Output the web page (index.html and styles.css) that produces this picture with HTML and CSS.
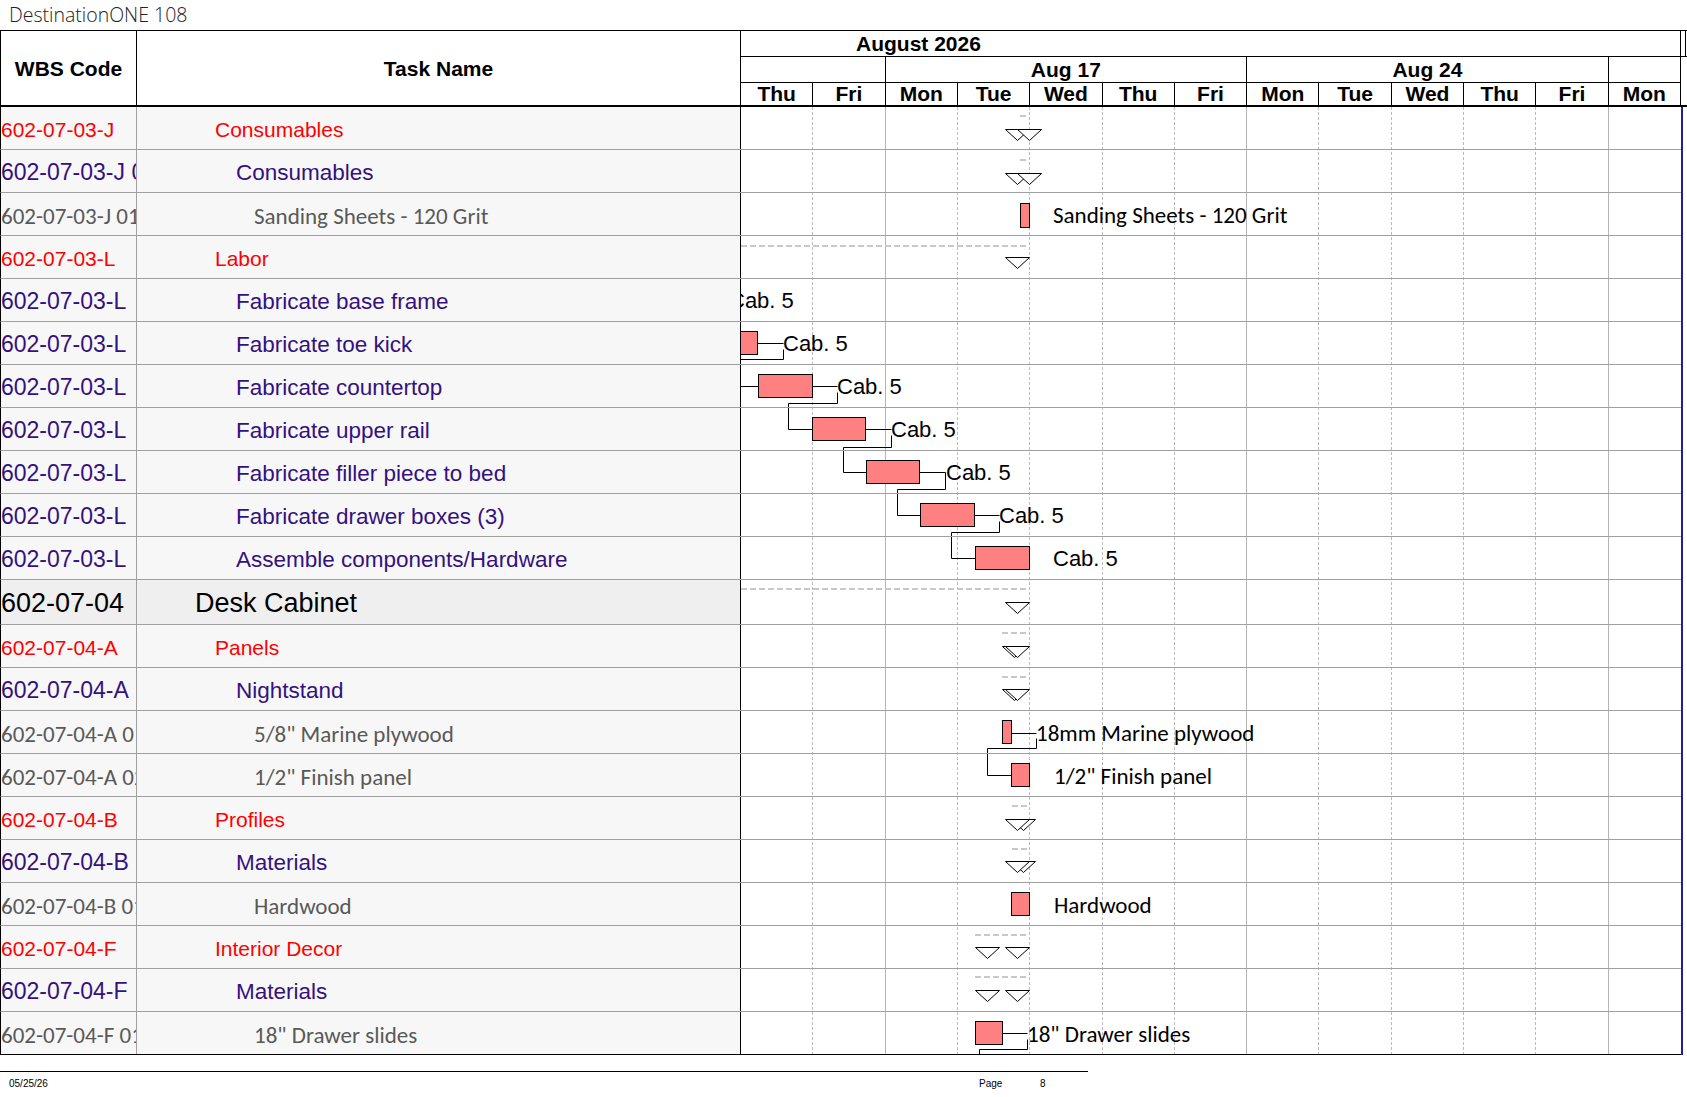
FILE: index.html
```html
<!DOCTYPE html>
<html lang="en">
<head>
<meta charset="utf-8">
<title>DestinationONE 108</title>
<link rel="stylesheet" href="styles.css">
</head>
<body>
<div class="title">DestinationONE 108</div>
<div class="sheet">
  <div class="head">
    <div class="h-wbs">WBS Code</div>
    <div class="h-task">Task Name</div>
    <div class="h-gantt">
      <div class="h-month"><div class="month">August 2026</div><div class="month-next"></div></div>
      <div class="h-weeks">
        <div class="wk w2"></div>
        <div class="wk w5">Aug 17</div>
        <div class="wk w5">Aug 24</div>
        <div class="wk w1"></div>
      </div>
      <div class="h-days">
        <div class="day">Thu</div><div class="day">Fri</div><div class="day">Mon</div><div class="day">Tue</div><div class="day">Wed</div><div class="day">Thu</div><div class="day">Fri</div><div class="day">Mon</div><div class="day">Tue</div><div class="day">Wed</div><div class="day">Thu</div><div class="day">Fri</div><div class="day">Mon</div>
      </div>
    </div>
  </div>
  <div class="body">
    <div class="ltable">
      <div class="lrow l1"><div class="code">602-07-03-J</div><div class="task">Consumables</div></div>
      <div class="lrow l2"><div class="code">602-07-03-J 01</div><div class="task">Consumables</div></div>
      <div class="lrow l3"><div class="code">602-07-03-J 01</div><div class="task">Sanding Sheets - 120 Grit</div></div>
      <div class="lrow l1"><div class="code">602-07-03-L</div><div class="task">Labor</div></div>
      <div class="lrow l2"><div class="code">602-07-03-L</div><div class="task">Fabricate base frame</div></div>
      <div class="lrow l2"><div class="code">602-07-03-L</div><div class="task">Fabricate toe kick</div></div>
      <div class="lrow l2"><div class="code">602-07-03-L</div><div class="task">Fabricate countertop</div></div>
      <div class="lrow l2"><div class="code">602-07-03-L</div><div class="task">Fabricate upper rail</div></div>
      <div class="lrow l2"><div class="code">602-07-03-L</div><div class="task">Fabricate filler piece to bed</div></div>
      <div class="lrow l2"><div class="code">602-07-03-L</div><div class="task">Fabricate drawer boxes (3)</div></div>
      <div class="lrow l2"><div class="code">602-07-03-L</div><div class="task">Assemble components/Hardware</div></div>
      <div class="lrow l0 big"><div class="code">602-07-04</div><div class="task">Desk Cabinet</div></div>
      <div class="lrow l1"><div class="code">602-07-04-A</div><div class="task">Panels</div></div>
      <div class="lrow l2"><div class="code">602-07-04-A</div><div class="task">Nightstand</div></div>
      <div class="lrow l3"><div class="code">602-07-04-A 01</div><div class="task">5/8" Marine plywood</div></div>
      <div class="lrow l3"><div class="code">602-07-04-A 02</div><div class="task">1/2" Finish panel</div></div>
      <div class="lrow l1"><div class="code">602-07-04-B</div><div class="task">Profiles</div></div>
      <div class="lrow l2"><div class="code">602-07-04-B</div><div class="task">Materials</div></div>
      <div class="lrow l3"><div class="code">602-07-04-B 01</div><div class="task">Hardwood</div></div>
      <div class="lrow l1"><div class="code">602-07-04-F</div><div class="task">Interior Decor</div></div>
      <div class="lrow l2"><div class="code">602-07-04-F</div><div class="task">Materials</div></div>
      <div class="lrow l3"><div class="code">602-07-04-F 01</div><div class="task">18" Drawer slides</div></div>
    </div>
    <div class="gbody">
      <div class="glines">
        <div class="vl"></div><div class="vl wk-end"></div><div class="vl"></div><div class="vl"></div><div class="vl"></div><div class="vl"></div><div class="vl wk-end"></div><div class="vl"></div><div class="vl"></div><div class="vl"></div><div class="vl"></div><div class="vl wk-end"></div><div class="vl last"></div>
      </div>
      <div class="grows">
        <div class="grow"></div>
        <div class="grow"></div>
        <div class="grow"><span class="glabel cal" style="left:312px">Sanding Sheets - 120 Grit</span></div>
        <div class="grow"></div>
        <div class="grow"><span class="glabel" style="left:-12px">Cab. 5</span></div>
        <div class="grow"><span class="glabel" style="left:42px">Cab. 5</span></div>
        <div class="grow"><span class="glabel" style="left:96px">Cab. 5</span></div>
        <div class="grow"><span class="glabel" style="left:150px">Cab. 5</span></div>
        <div class="grow"><span class="glabel" style="left:205px">Cab. 5</span></div>
        <div class="grow"><span class="glabel" style="left:258px">Cab. 5</span></div>
        <div class="grow"><span class="glabel" style="left:312px">Cab. 5</span></div>
        <div class="grow big"></div>
        <div class="grow"></div>
        <div class="grow"></div>
        <div class="grow"><span class="glabel cal" style="left:295px">18mm Marine plywood</span></div>
        <div class="grow"><span class="glabel cal" style="left:313px">1/2" Finish panel</span></div>
        <div class="grow"></div>
        <div class="grow"></div>
        <div class="grow"><span class="glabel cal" style="left:313px">Hardwood</span></div>
        <div class="grow"></div>
        <div class="grow"></div>
        <div class="grow"><span class="glabel cal" style="left:286px">18" Drawer slides</span></div>
      </div>
      <svg class="gsvg" width="940" height="948" viewBox="0 0 940 948">
        <g fill="none" stroke="#c8c8c8" stroke-width="2" stroke-dasharray="6 3">
          <line x1="279" y1="9" x2="288" y2="9"/>
          <line x1="279" y1="53" x2="288" y2="53"/>
          <line x1="0" y1="139" x2="288" y2="139"/>
          <line x1="0" y1="482" x2="288" y2="482"/>
          <line x1="261" y1="526" x2="288" y2="526"/>
          <line x1="261" y1="570" x2="288" y2="570"/>
          <line x1="271" y1="699" x2="288" y2="699"/>
          <line x1="271" y1="742" x2="288" y2="742"/>
          <line x1="234" y1="828" x2="288" y2="828"/>
          <line x1="234" y1="870" x2="288" y2="870"/>
        </g>
        <g fill="none" stroke="#000" stroke-width="1" transform="translate(0.5 0.5)">
          <polyline points="16,236 42,236"/>
          <polyline points="42,242 42,252 -2,252"/>
          <polyline points="-1,279 17,279"/>
          <polyline points="71,279 96,279"/>
          <polyline points="96,285 96,296 47,296 47,322 71,322"/>
          <polyline points="124,322 150,322"/>
          <polyline points="150,328 150,340 102,340 102,365 125,365"/>
          <polyline points="178,365 204,365"/>
          <polyline points="204,365 204,382 156,382 156,408 179,408"/>
          <polyline points="233,408 258,408"/>
          <polyline points="258,414 258,425 210,425 210,451 234,451"/>
          <polyline points="270,626 295,626"/>
          <polyline points="295,631 295,641 246,641 246,668 270,668"/>
          <polyline points="261,926 286,926"/>
          <polyline points="286,932 286,942 238,942 238,952"/>
        </g>
        <g fill="#ff8080" stroke="#000" stroke-width="1" transform="translate(0.5 0.5)">
          <rect x="279" y="96" width="9" height="24"/>
          <rect x="-5" y="224" width="21" height="23"/>
          <rect x="17" y="267" width="54" height="23"/>
          <rect x="71" y="310" width="53" height="23"/>
          <rect x="125" y="353" width="53" height="23"/>
          <rect x="179" y="396" width="54" height="23"/>
          <rect x="234" y="439" width="54" height="23"/>
          <rect x="261" y="613" width="9" height="23"/>
          <rect x="270" y="656" width="18" height="23"/>
          <rect x="270" y="785" width="18" height="23"/>
          <rect x="234" y="914" width="27" height="23"/>
        </g>
        <g fill="#fff" stroke="#000" stroke-width="1" stroke-linejoin="miter" transform="translate(0.5 0.5)">
          <polygon points="264,22 288,22 276,33"/>
          <polygon points="276,22 300,22 288,33"/>
          <polygon points="264,66 288,66 276,77"/>
          <polygon points="276,66 300,66 288,77"/>
          <polygon points="264,150 288,150 276,161"/>
          <polygon points="264,495 288,495 276,506"/>
          <polygon points="261,539 285,539 273,550"/>
          <polygon points="264,539 288,539 276,550"/>
          <polygon points="261,582 285,582 273,593"/>
          <polygon points="264,582 288,582 276,593"/>
          <polygon points="270,712 294,712 282,723"/>
          <polygon points="264,712 288,712 276,723"/>
          <polygon points="270,754 294,754 282,765"/>
          <polygon points="264,754 288,754 276,765"/>
          <polygon points="234,840 258,840 246,851"/>
          <polygon points="264,840 288,840 276,851"/>
          <polygon points="234,883 258,883 246,894"/>
          <polygon points="264,883 288,883 276,894"/>
        </g>
      </svg>
    </div>
  </div>
</div>
<div class="footer">
  <div class="fdate">05/25/26</div>
  <div>Page</div>
  <div>8</div>
</div>
</body>
</html>
```

FILE: styles.css
```css
body {
  margin: 0;
  width: 1687px;
  overflow: hidden;
  background: #fff;
  color: #000;
  font-family: "Liberation Sans", Arial, sans-serif;
}

.title {
  height: 30px;
  line-height: 30px;
  padding-left: 9px;
  font-family: "Open Sans", "DejaVu Sans", sans-serif;
  font-weight: 300;
  font-size: 19.5px;
  color: #222;
  white-space: nowrap;
}

/* ---------- header ---------- */
.head {
  display: flex;
  border-top: 1px solid #000;
  border-bottom: 2px solid #000;
}

.h-wbs,
.h-task {
  box-sizing: border-box;
  display: flex;
  align-items: center;
  justify-content: center;
  padding-top: 2px;
  font-weight: bold;
  font-size: 21px;
  border-right: 1px solid #000;
}

.h-wbs {
  width: 137px;
  border-left: 1px solid #000;
}

.h-task {
  width: 604px;
}

.h-gantt {
  width: 946px;
}

.h-month {
  display: flex;
  height: 26px;
  box-sizing: border-box;
  border-bottom: 1px solid #000;
}

.month {
  width: 940px;
  box-sizing: border-box;
  border-right: 1px solid #000;
  padding-left: 115px;
  font-weight: bold;
  font-size: 21px;
  line-height: 25px;
  white-space: nowrap;
}

.month-next {
  width: 4px;
  border-right: 1px solid #000;
}

.h-weeks,
.h-days {
  display: grid;
  grid-template-columns: repeat(13, 1fr);
  width: 940px;
}

.h-weeks {
  height: 26px;
  box-sizing: border-box;
  border-bottom: 1px solid #000;
}

.wk {
  border-right: 1px solid #000;
  text-align: center;
  font-weight: bold;
  font-size: 21px;
  line-height: 25px;
  white-space: nowrap;
}

.w1 { grid-column: span 1; }
.w2 { grid-column: span 2; }
.w5 { grid-column: span 5; }

.h-days {
  height: 22px;
}

.day {
  border-right: 1px solid #000;
  text-align: center;
  font-weight: bold;
  font-size: 21px;
  line-height: 22px;
}

/* ---------- body ---------- */
.body {
  display: flex;
}

.ltable {
  width: 741px;
}

.lrow {
  display: grid;
  grid-template-columns: 136px 604px;
  height: 43px;
  box-sizing: border-box;
  border-left: 1px solid #000;
  border-bottom: 1px solid #a0a0a0;
  background: #f7f7f7;
}

.lrow:last-child {
  border-bottom-color: #000;
}

.lrow.big {
  height: 45px;
  background: #efefef;
}

.code,
.task {
  display: flex;
  align-items: center;
  overflow: hidden;
  white-space: nowrap;
  padding-top: 3px;
}

.code {
  border-right: 1px solid #a0a0a0;
}

.task {
  border-right: 1px solid #000;
}

.l0 { color: #000; font-size: 27px; }
.l0 .task { padding-left: 58px; }

.l1 { color: #f00; }
.l1 .code { font-size: 21px; }
.l1 .task { font-size: 21px; padding-left: 78px; }

.l2 { color: #34117f; }
.l2 .code { font-size: 23px; }
.l2 .task { font-size: 22.5px; padding-left: 99px; }

.l3 {
  color: #595959;
  font-family: Carlito, Calibri, Lato, sans-serif;
  font-size: 23px;
}
.l3 .task { padding-left: 117px; }

/* ---------- gantt ---------- */
.gbody {
  display: grid;
  width: 942px;
  box-sizing: border-box;
  border-right: 2px solid #1f1fa0;
  overflow: hidden;
}

.gbody > * {
  grid-area: 1 / 1;
}

.glines {
  display: grid;
  grid-template-columns: repeat(13, 1fr);
}

.vl {
  border-right: 1px dashed #bcbcbc;
}

.vl.wk-end {
  border-right: 1px solid #b4b4b4;
}

.vl.last {
  border-right: 0;
}

.grows {
  display: flex;
  flex-direction: column;
}

.grow {
  position: relative;
  height: 43px;
  box-sizing: border-box;
  border-bottom: 1px solid #a0a0a0;
}

.grow.big {
  height: 45px;
}

.grow:last-child {
  border-bottom-color: #000;
}

.glabel {
  position: absolute;
  top: 1px;
  line-height: 41px;
  white-space: nowrap;
  font-size: 22px;
  color: #000;
}

.glabel.cal {
  top: 2px;
  font-family: Carlito, Calibri, Lato, sans-serif;
  font-size: 23px;
}

.gsvg {
  display: block;
  pointer-events: none;
  overflow: visible;
}

/* ---------- footer ---------- */
.footer {
  width: 1088px;
  margin-top: 16px;
  border-top: 1px solid #000;
  display: grid;
  grid-template-columns: 979px 61px 1fr;
  padding-top: 6px;
  font-size: 10px;
  line-height: 12px;
}

.fdate {
  padding-left: 9px;
}
```
